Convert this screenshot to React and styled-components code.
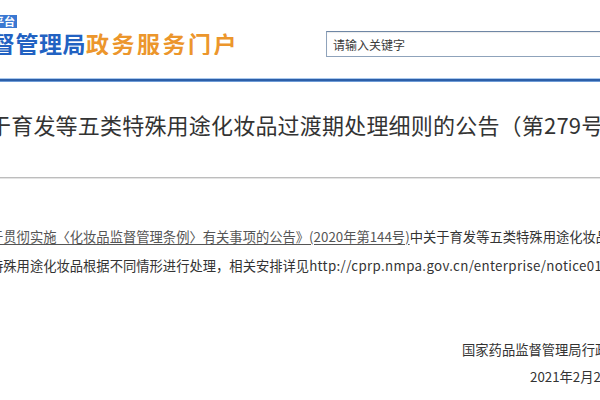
import React from "react";
import styled, { createGlobalStyle } from "styled-components";

const Global = createGlobalStyle`
  html, body { margin: 0; padding: 0; background: #fff; }
  body { width: 600px; height: 400px; overflow: hidden; font-family: "Noto Sans CJK SC", "Noto Sans", sans-serif; }
`;

const Page = styled.div`
  width: 600px;
  height: 400px;
  overflow: hidden;
  background: #fff;
`;

const Header = styled.header`
  height: 78px;
  display: flex;
  align-items: flex-start;
`;

const Brand = styled.div`
  width: 326px;
  flex: none;
  display: flex;
  flex-direction: column;
  align-items: flex-start;
  overflow: hidden;
`;

const Badge = styled.span`
  margin-top: 15px;
  margin-left: -9px;
  height: 13px;
  padding: 0 2px;
  background: #3a78d2;
  color: #fff;
  font-size: 11px;
  line-height: 13px;
  font-weight: 700;
  white-space: nowrap;
`;

const BrandTitle = styled.div`
  margin-top: 4px;
  margin-left: -8px;
  font-size: 23px;
  line-height: 23px;
  font-weight: 700;
  white-space: nowrap;
`;

const BrandPart = styled.span`
  color: ${(p) => p.$color};
  letter-spacing: ${(p) => p.$spacing || "0px"};
`;

const Search = styled.div`
  margin-top: 31px;
  flex: none;
  width: 300px;
  height: 26px;
  box-sizing: border-box;
  border: 1px solid #8fa3bb;
  border-top-color: #6f87a5;
  box-shadow: inset 0 1px 1px rgba(0, 0, 0, 0.08);
  display: flex;
  align-items: center;
  padding-left: 6px;
  font-size: 12px;
  color: #3a3a3a;
`;

const Rule = styled.div`
  height: 2px;
  background: #2d5fa8;
  border-top: 1px solid #a9c9ee;
  border-bottom: 1px solid #6e9bd6;
`;

const ArticleTitle = styled.h1`
  margin: 31px 0 0 -11px;
  font-size: 22px;
  line-height: 22px;
  font-weight: 400;
  letter-spacing: 0.2px;
  color: #333;
  white-space: nowrap;
`;

const Divider = styled.div`
  margin-top: 42px;
  height: 1px;
  background: #bdbdbd;
  border-bottom: 1px solid #e4e4e4;
`;

const Body = styled.div`
  margin-top: 43px;
  font-size: 13.3px;
  color: #333;
`;

const Line = styled.p`
  margin: 0 0 0 -10px;
  line-height: 29px;
  white-space: nowrap;
`;

const Link = styled.span`
  color: #555;
  text-decoration: underline;
  text-underline-offset: 2px;
`;

const Url = styled.span`
  letter-spacing: 0.35px;
`;

const Sign = styled.p`
  margin: ${(p) => p.$top}px 0 0 ${(p) => p.$left}px;
  font-size: 13.3px;
  line-height: 20px;
  color: #333;
  white-space: nowrap;
`;

export default function App() {
  return (
    <Page>
      <Global />
      <Header>
        <Brand>
          <Badge>平台</Badge>
          <BrandTitle>
            <BrandPart $color="#2262c2" $spacing="0.5px">督管理局</BrandPart>
            <BrandPart $color="#ec962c" $spacing="2.5px">政务服务门户</BrandPart>
          </BrandTitle>
        </Brand>
        <Search>请输入关键字</Search>
      </Header>
      <Rule />
      <ArticleTitle>于育发等五类特殊用途化妆品过渡期处理细则的公告（第279号）</ArticleTitle>
      <Divider />
      <Body>
        <Line>
          <Link>于贯彻实施〈化妆品监督管理条例〉有关事项的公告》(2020年第144号)</Link>
          中关于育发等五类特殊用途化妆品
        </Line>
        <Line>
          特殊用途化妆品根据不同情形进行处理，相关安排详见<Url>http://cprp.nmpa.gov.cn/enterprise/notice01</Url>
        </Line>
      </Body>
      <Sign $top={60} $left={462}>国家药品监督管理局行政受理服务中心</Sign>
      <Sign $top={7} $left={530}>2021年2月26日</Sign>
    </Page>
  );
}
